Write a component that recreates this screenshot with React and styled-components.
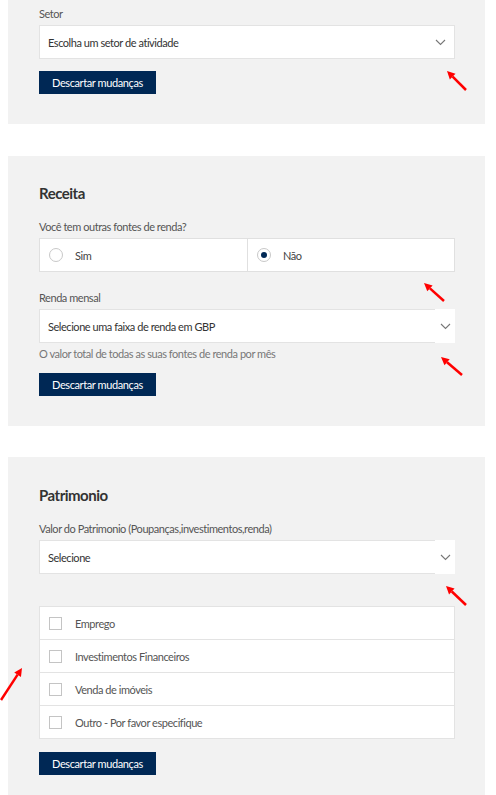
import React from 'react';
import styled, { createGlobalStyle } from 'styled-components';

const GlobalStyle = createGlobalStyle`
  body {
    margin: 0;
    background: #fff;
    font-family: Lato, "Open Sans", "Liberation Sans", sans-serif;
    letter-spacing: -0.45px;
  }
`;

const Page = styled.div`
  position: relative;
  width: 496px;
  min-height: 795px;
  padding: 0 0 0 8px;
  box-sizing: border-box;
  overflow: hidden;
`;

const Panel = styled.section`
  width: 477px;
  box-sizing: border-box;
  background: #f2f2f2;
  padding: ${(p) => p.top || 27}px 30px 30px 31px;
  margin-bottom: ${(p) => p.gap || 0}px;
`;

const Heading = styled.h2`
  margin: 0 0 17px;
  font-size: 15px;
  line-height: 20px;
  font-weight: 700;
  color: #333;
  letter-spacing: -0.5px;
`;

const Label = styled.div`
  font-size: 11px;
  line-height: 14px;
  color: #555;
  margin-top: ${(p) => p.mt || 0}px;
  margin-bottom: 4px;
`;

const Helper = styled.div`
  font-size: 11px;
  line-height: 14px;
  color: #777;
  margin-top: 4px;
`;

const SelectBox = styled.div`
  display: flex;
  height: 34px;
  box-sizing: border-box;
  background: #fff;
  border: 1px solid #e3e3e3;
  border-width: ${(p) => (p.open ? '1px 0 1px 1px' : '1px')};
`;

const SelectText = styled.div`
  flex: 1;
  display: flex;
  align-items: center;
  padding-left: 8px;
  font-size: 11px;
  color: #333;
`;

const Chevron = styled.div`
  width: 20px;
  display: flex;
  align-items: center;
  justify-content: center;
  background: #fff;
  margin: ${(p) => (p.open ? '-1px 0' : '0')};
  padding-right: ${(p) => (p.open ? '0' : '4px')};
`;

const Button = styled.button`
  display: block;
  margin-top: ${(p) => p.mt || 12}px;
  height: 23px;
  padding: 0 13px;
  border: 0;
  background: #002855;
  color: #fff;
  font-family: inherit;
  letter-spacing: -0.4px;
  font-size: 11px;
`;

const RadioGroup = styled.div`
  display: grid;
  grid-template-columns: 207px 1fr;
  height: 34px;
  box-sizing: border-box;
  background: #fff;
  border: 1px solid #e0e0e0;
`;

const RadioOption = styled.label`
  display: flex;
  align-items: center;
  padding-left: 9px;
  font-size: 11px;
  color: #444;
  border-left: ${(p) => (p.divider ? '1px solid #e0e0e0' : '0')};
`;

const RadioDot = styled.span`
  width: 14px;
  height: 14px;
  box-sizing: border-box;
  border-radius: 50%;
  border: 1px solid #c8c8c8;
  display: flex;
  align-items: center;
  justify-content: center;
  margin-right: 12px;

  &::after {
    content: '';
    width: 6px;
    height: 6px;
    border-radius: 50%;
    background: ${(p) => (p.checked ? '#002855' : 'transparent')};
  }
`;

const CheckList = styled.div`
  margin-top: 32px;
  background: #fff;
  border: 1px solid #e3e3e3;
`;

const CheckRow = styled.label`
  display: flex;
  align-items: center;
  height: 32px;
  padding-left: 9px;
  font-size: 11px;
  color: #555;
  border-top: ${(p) => (p.first ? '0' : '1px solid #e3e3e3')};
`;

const Box = styled.span`
  width: 11px;
  height: 11px;
  border: 1px solid #c4c4c4;
  margin-right: 13px;
`;

const Overlay = styled.svg`
  position: absolute;
  left: 0;
  top: 0;
  pointer-events: none;
`;

const ChevronIcon = () => (
  <svg width="11" height="7" viewBox="0 0 11 7">
    <path d="M1 1l4.5 4.5L10 1" fill="none" stroke="#777" strokeWidth="1.1" />
  </svg>
);

const Select = ({ text, open }) => (
  <SelectBox open={open}>
    <SelectText>{text}</SelectText>
    <Chevron open={open}>
      <ChevronIcon />
    </Chevron>
  </SelectBox>
);

const arrows = [
  [447, 71, 466, 90],
  [424, 283, 444, 301],
  [441, 357, 462, 375],
  [446, 586, 466, 605],
  [22, 668, 1, 700],
];

const Arrow = ({ hx, hy, tx, ty }) => {
  const a = Math.atan2(hy - ty, hx - tx);
  const len = 8;
  const w = 4;
  const bx = hx - Math.cos(a) * len;
  const by = hy - Math.sin(a) * len;
  const px = -Math.sin(a) * w;
  const py = Math.cos(a) * w;
  return (
    <g>
      <line x1={tx} y1={ty} x2={bx} y2={by} stroke="#f00" strokeWidth="2.5" />
      <polygon points={`${hx},${hy} ${bx + px},${by + py} ${bx - px},${by - py}`} fill="#f00" />
    </g>
  );
};

const App = () => (
  <Page>
    <GlobalStyle />
    <Panel top={7} gap={32}>
      <Label>Setor</Label>
      <Select text="Escolha um setor de atividade" />
      <Button>Descartar mudanças</Button>
    </Panel>

    <Panel gap={31}>
      <Heading>Receita</Heading>
      <Label>Você tem outras fontes de renda?</Label>
      <RadioGroup>
        <RadioOption>
          <RadioDot />
          Sim
        </RadioOption>
        <RadioOption divider>
          <RadioDot checked />
          Não
        </RadioOption>
      </RadioGroup>
      <Label mt={19}>Renda mensal</Label>
      <Select open text="Selecione uma faixa de renda em GBP" />
      <Helper>O valor total de todas as suas fontes de renda por mês</Helper>
      <Button>Descartar mudanças</Button>
    </Panel>

    <Panel top={28}>
      <Heading>Patrimonio</Heading>
      <Label>Valor do Patrimonio (Poupanças,investimentos,renda)</Label>
      <Select open text="Selecione" />
      <CheckList>
        {['Emprego', 'Investimentos Financeiros', 'Venda de imóveis', 'Outro - Por favor especifique'].map((t, i) => (
          <CheckRow key={t} first={i === 0}>
            <Box />
            {t}
          </CheckRow>
        ))}
      </CheckList>
      <Button mt={13}>Descartar mudanças</Button>
    </Panel>

    <Overlay width="496" height="795">
      {arrows.map(([hx, hy, tx, ty], i) => (
        <Arrow key={i} hx={hx} hy={hy} tx={tx} ty={ty} />
      ))}
    </Overlay>
  </Page>
);

export default App;
